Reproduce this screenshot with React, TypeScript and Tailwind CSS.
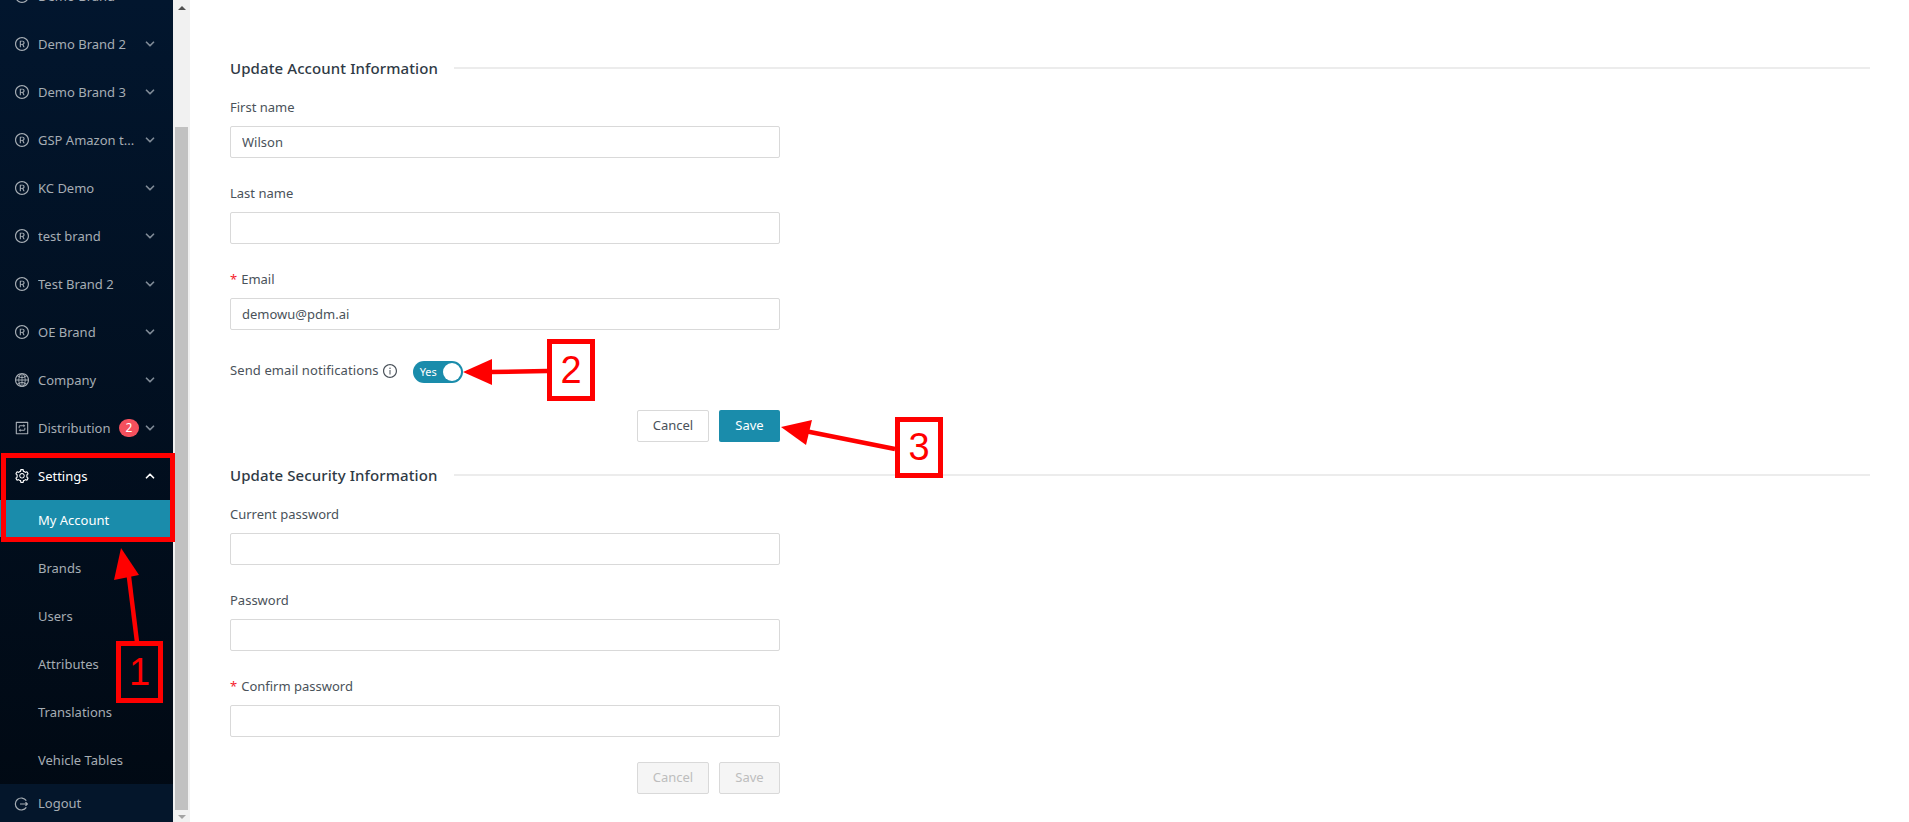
import { ChevronDown, ChevronUp } from "lucide-react";
import {
  AiOutlineGlobal,
  AiOutlineInfoCircle,
  AiOutlineInteraction,
  AiOutlineSetting,
  AiOutlineTrademarkCircle,
} from "react-icons/ai";

const brands = [
  "Demo Brand",
  "Demo Brand 2",
  "Demo Brand 3",
  "GSP Amazon t...",
  "KC Demo",
  "test brand",
  "Test Brand 2",
  "OE Brand",
];

const settingsLinks = ["Brands", "Users", "Attributes", "Translations", "Vehicle Tables"];

function MenuRow({ icon, label, badge }: { icon: React.ReactNode; label: string; badge?: string }) {
  return (
    <div className="flex h-12 shrink-0 items-center pl-[14px] pr-[16px] text-[#a6adb4]">
      <span className="flex w-[24px] shrink-0 text-[16px]">{icon}</span>
      <span className="flex-1 truncate pt-[1px]">{label}</span>
      {badge && (
        <span className="flex h-[18px] w-[20px] items-center justify-center rounded-full bg-[#f5505d] text-[12px] text-white">
          {badge}
        </span>
      )}
      <ChevronDown size={14} strokeWidth={3} className="ml-[4px] -mt-[1px] shrink-0 text-[#7f8a96]" />
    </div>
  );
}

function Sidebar() {
  return (
    <aside className="flex h-full w-[173px] shrink-0 flex-col bg-gradient-to-b from-[#02162e] to-[#010913] text-[13px]">
      <nav className="-mt-[28px] flex min-h-0 flex-1 flex-col overflow-visible">
        {brands.map((b) => (
          <MenuRow key={b} label={b} icon={<AiOutlineTrademarkCircle />} />
        ))}
        <MenuRow label="Company" icon={<AiOutlineGlobal />} />
        <MenuRow label="Distribution" badge="2" icon={<AiOutlineInteraction />} />
        <div className="flex h-12 shrink-0 items-center pl-[14px] pr-[16px] text-white">
          <span className="flex w-[24px] shrink-0 text-[16px]">
            <AiOutlineSetting />
          </span>
          <span className="flex-1 pt-[1px]">Settings</span>
          <ChevronUp size={14} strokeWidth={3} className="ml-[4px] shrink-0" />
        </div>
        <div className="flex h-[37px] shrink-0 items-center bg-[#1a8cab] pl-[38px] pt-[4px] text-white">My Account</div>
        <div className="h-[7px] shrink-0" />
        {settingsLinks.map((l) => (
          <div key={l} className="flex h-12 shrink-0 items-center pl-[38px] pt-[1px] text-[#a6adb4]">
            {l}
          </div>
        ))}
      </nav>
      <div className="z-10 flex h-[38px] shrink-0 items-center bg-[#04162b] pl-[14px] pt-[2px] text-[#a6adb4]">
        <svg width="14" height="14" viewBox="0 0 14 14" fill="none" stroke="currentColor" strokeWidth="1.2" className="mr-[10px]">
          <path d="M12.3 3.6A6 6 0 1 0 12.3 10.4" />
          <path d="M6 7h7.5M11.5 5.2 13.4 7l-1.9 1.8" />
        </svg>
        Logout
      </div>
    </aside>
  );
}

function Scrollbar() {
  return (
    <div className="flex h-full w-[17px] shrink-0 flex-col items-center bg-[#f1f1f1]">
      <div className="mt-[6px] h-0 w-0 border-x-[4px] border-b-[4px] border-x-transparent border-b-[#505050]" />
      <div className="h-[117px] shrink-0" />
      <div className="h-[683px] w-[13px] shrink-0 bg-[#c1c1c1]" />
      <div className="mt-[5px] h-0 w-0 border-x-[4px] border-t-[4px] border-x-transparent border-t-[#a3a3a3]" />
    </div>
  );
}

function Heading({ children }: { children: string }) {
  return (
    <div className="flex h-[20px] items-center">
      <h2 className="whitespace-nowrap text-[15px] font-medium tracking-[0.1px] text-[#2f3a45]">{children}</h2>
      <div className="ml-[16px] h-[2px] flex-1 bg-[#ececec]" />
    </div>
  );
}

function Field({ label, value, required }: { label: string; value?: string; required?: boolean }) {
  return (
    <div className="h-[86px]">
      <label className="flex h-[32px] items-start pt-[3px] text-[13px] leading-[20px] text-[#4a525a]">
        {required && <span className="mr-[4px] text-[#f5222d]">*</span>}
        {label}
      </label>
      <input
        readOnly
        value={value ?? ""}
        className="block h-[32px] w-[550px] rounded-[2px] border border-[#d9d9d9] bg-white px-[11px] text-[13px] text-[#4a525a] outline-none"
      />
    </div>
  );
}

function FormButtons({ disabled }: { disabled?: boolean }) {
  return (
    <div className="flex w-[550px] justify-end gap-[10px]">
      <button
        className={
          disabled
            ? "h-[32px] w-[72px] rounded-[2px] border border-[#d9d9d9] bg-[#f5f5f5] text-[13px] text-[#bdbdbd]"
            : "h-[32px] w-[72px] rounded-[2px] border border-[#d9d9d9] bg-white text-[13px] text-[#4a525a]"
        }
      >
        Cancel
      </button>
      <button
        className={
          disabled
            ? "h-[32px] w-[61px] rounded-[2px] border border-[#d9d9d9] bg-[#f5f5f5] text-[13px] text-[#bdbdbd]"
            : "h-[32px] w-[61px] rounded-[2px] bg-[#1a8cab] text-[13px] text-white"
        }
      >
        Save
      </button>
    </div>
  );
}

function Annotations() {
  return (
    <>
      <div className="absolute left-[1px] top-[453px] h-[89px] w-[174px] border-[5px] border-[#ff0000]" />
      <div className="absolute left-[116px] top-[641px] flex h-[62px] w-[47px] items-center justify-center border-[5px] border-[#ff0000] font-['Liberation_Sans',sans-serif] text-[38px] text-[#ff0000]">
        1
      </div>
      <div className="absolute left-[547px] top-[339px] flex h-[62px] w-[48px] items-center justify-center border-[5px] border-[#ff0000] font-['Liberation_Sans',sans-serif] text-[38px] text-[#ff0000]">
        2
      </div>
      <div className="absolute left-[895px] top-[417px] flex h-[61px] w-[48px] items-center justify-center border-[5px] border-[#ff0000] font-['Liberation_Sans',sans-serif] text-[38px] text-[#ff0000]">
        3
      </div>
      <svg className="pointer-events-none absolute left-0 top-0" width="1909" height="822" fill="#ff0000" stroke="none">
        <path d="M137 642 127.5 565" stroke="#ff0000" strokeWidth="4.5" />
        <polygon points="121,548 114,580 139,575" />
        <path d="M547 371 490 372" stroke="#ff0000" strokeWidth="4.5" />
        <polygon points="463,372 492,359 492,385" />
        <path d="M895 449 805 431" stroke="#ff0000" strokeWidth="4.5" />
        <polygon points="781,427 812,420 806,445" />
      </svg>
    </>
  );
}

export default function App() {
  return (
    <div className="relative flex h-[822px] overflow-hidden bg-white font-['Noto_Sans',sans-serif]">
      <Sidebar />
      <Scrollbar />
      <main className="min-w-0 flex-1 pl-[40px] pr-[39px] pt-[58px]">
        <Heading>Update Account Information</Heading>
        <div className="pt-[16px]">
          <Field label="First name" value="Wilson" />
          <Field label="Last name" />
          <Field label="Email" value="demowu@pdm.ai" required />
        </div>
        <div className="flex h-[40px] items-center text-[13px] text-[#4a525a]">
          <span className="-mt-[3px] tracking-[0.1px]">Send email notifications</span>
          <AiOutlineInfoCircle className="ml-[3px] -mt-[3px] text-[16px]" />
          <span className="ml-[15px] flex h-[22px] w-[50px] items-center justify-between rounded-full bg-[#1a8cab] pl-[7px] pr-[2px] text-[11px] text-white">
            Yes
            <span className="h-[18px] w-[18px] rounded-full bg-white" />
          </span>
        </div>
        <div className="mt-[18px]">
          <FormButtons />
        </div>
        <div className="mt-[23px]">
          <Heading>Update Security Information</Heading>
        </div>
        <div className="pt-[16px]">
          <Field label="Current password" />
          <Field label="Password" />
          <Field label="Confirm password" required />
        </div>
        <div className="mt-[3px]">
          <FormButtons disabled />
        </div>
      </main>
      <Annotations />
    </div>
  );
}
